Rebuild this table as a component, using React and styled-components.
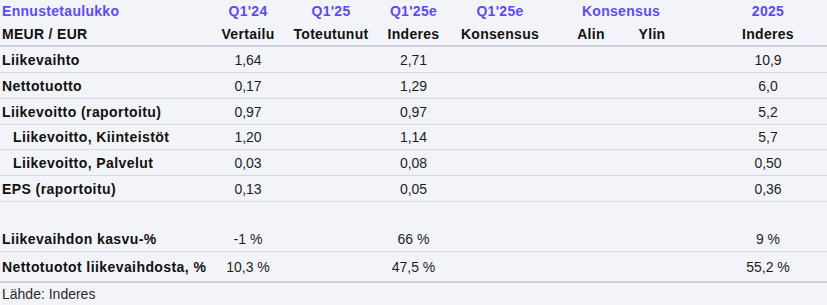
import React from 'react';
import styled, { createGlobalStyle } from 'styled-components';

const GlobalStyle = createGlobalStyle`
    html, body {
        margin: 0;
        padding: 0;
        background: #f3f4f9;
    }
    body {
        font-family: "Liberation Sans", Arial, sans-serif;
    }
`;

const cols = '206px 84px 82px 83px 90px 15px 62px 60px 27px 118px';

const rows = [
    { label: 'Liikevaihto', values: ['1,64', '', '2,71', '', '', '', '10,9'], h: 25 },
    { label: 'Nettotuotto', values: ['0,17', '', '1,29', '', '', '', '6,0'], h: 25 },
    { label: 'Liikevoitto (raportoitu)', values: ['0,97', '', '0,97', '', '', '', '5,2'], h: 25 },
    { label: 'Liikevoitto, Kiinteistöt', values: ['1,20', '', '1,14', '', '', '', '5,7'], h: 24, indent: true },
    { label: 'Liikevoitto, Palvelut', values: ['0,03', '', '0,08', '', '', '', '0,50'], h: 25, indent: true },
    { label: 'EPS (raportoitu)', values: ['0,13', '', '0,05', '', '', '', '0,36'], h: 25 },
    { spacer: true, h: 25 },
    { label: 'Liikevaihdon kasvu-%', values: ['-1 %', '', '66 %', '', '', '', '9 %'], h: 24 },
    { label: 'Nettotuotot liikevaihdosta, %', values: ['10,3 %', '', '47,5 %', '', '', '', '55,2 %'], h: 29, last: true },
];

// columns where the values sit (grid column numbers)
const valueCols = [2, 3, 4, 5, 7, 8, 10];

const App = () => {
    return (
        <Container>
            <GlobalStyle />
            <Row $h={22}>
                <Title $col={1} $left>Ennustetaulukko</Title>
                <Title $col={2}>Q1'24</Title>
                <Title $col={3}>Q1'25</Title>
                <Title $col={4}>Q1'25e</Title>
                <Title $col={5}>Q1'25e</Title>
                <Title $col="7 / span 2">Konsensus</Title>
                <Title $col={10}>2025</Title>
            </Row>
            <Row $h={23} $border="2px solid #cdd0d8">
                <Head $col={1} $left>MEUR / EUR</Head>
                <Head $col={2}>Vertailu</Head>
                <Head $col={3}>Toteutunut</Head>
                <Head $col={4}>Inderes</Head>
                <Head $col={5}>Konsensus</Head>
                <Head $col={7}>Alin</Head>
                <Head $col={8}>Ylin</Head>
                <Head $col={10}>Inderes</Head>
            </Row>
            {rows.map((r, i) =>
                r.spacer ? (
                    <Row key={i} $h={r.h} />
                ) : (
                    <Row
                        key={i}
                        $h={r.h}
                        $border={r.last ? '2px solid #cdd0d8' : '1px solid #d6d9e0'}
                    >
                        <Label $indent={r.indent}>{r.label}</Label>
                        {r.values.map((v, j) => (
                            <Value key={j} $col={valueCols[j]}>{v}</Value>
                        ))}
                    </Row>
                )
            )}
            <Source>Lähde: Inderes</Source>
        </Container>
    );
};

export default App;

const Container = styled.div`
    width: 827px;
    height: 305px;
    overflow: hidden;
    background: #f3f4f9;
    color: #111;
    font-size: 14px;
`;

const Row = styled.div`
    display: grid;
    grid-template-columns: ${cols};
    align-items: center;
    height: ${(p) => p.$h}px;
    border-bottom: ${(p) => p.$border || 'none'};
`;

const Cell = styled.div`
    grid-column: ${(p) => p.$col};
    grid-row: 1;
    text-align: ${(p) => (p.$left ? 'left' : 'center')};
    padding-left: ${(p) => (p.$left ? '2px' : '0')};
    white-space: nowrap;
    overflow: hidden;
`;

const Title = styled(Cell)`
    font-weight: 700;
    letter-spacing: 0.3px;
    color: #5b4cf5;
`;

const Head = styled(Cell)`
    font-weight: 700;
    letter-spacing: 0.3px;
    color: #111;
`;

const Label = styled.div`
    grid-column: 1;
    grid-row: 1;
    padding-left: ${(p) => (p.$indent ? '13px' : '2px')};
    font-weight: 700;
    letter-spacing: 0.42px;
    white-space: nowrap;
    overflow: hidden;
    color: #111;
`;

const Value = styled(Cell)`
    color: #1d1d1f;
`;

const Source = styled.div`
    padding: 3px 0 0 2px;
    color: #2a2a2a;
`;
